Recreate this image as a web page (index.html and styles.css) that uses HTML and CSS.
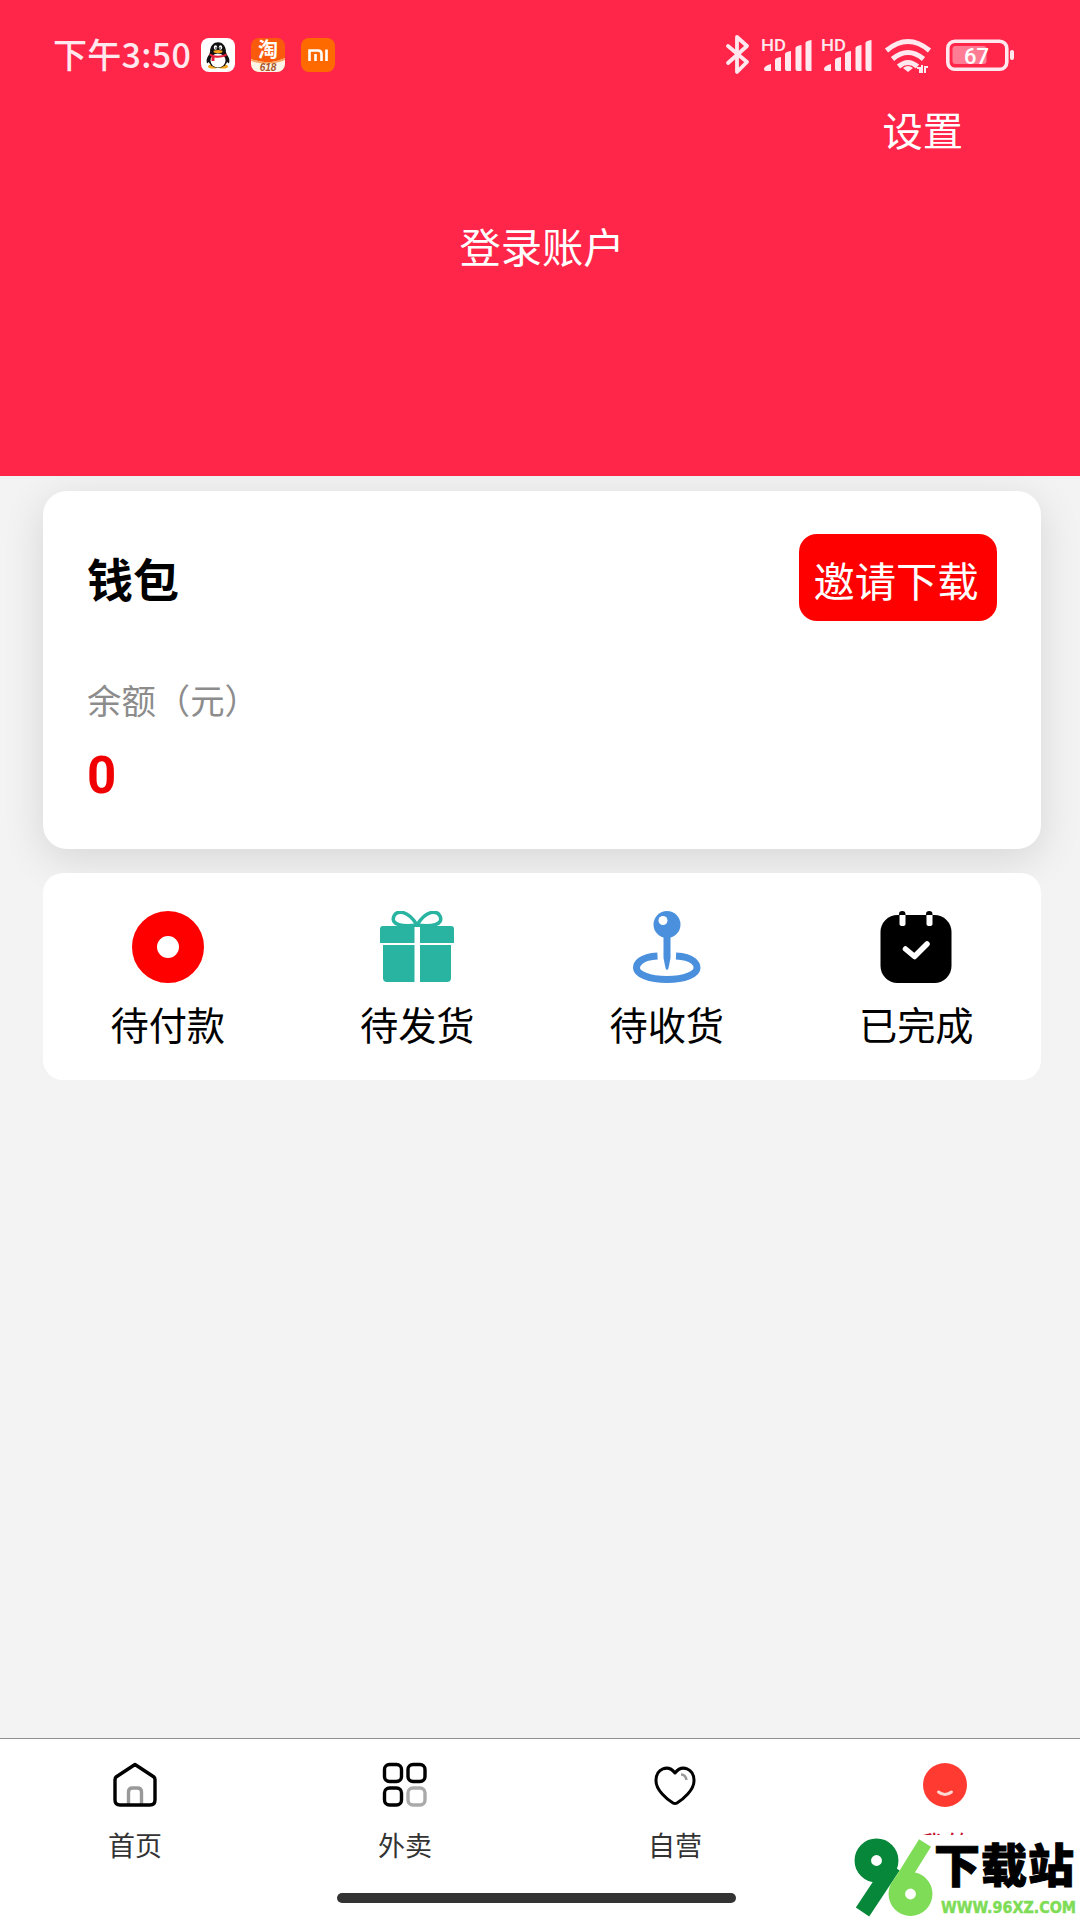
FILE: index.html
```html
<!DOCTYPE html>
<html lang="zh-CN">
<head>
<meta charset="utf-8">
<title>我的</title>
<link rel="stylesheet" href="styles.css">
</head>
<body>
<div class="screen">
  <header class="hero">
    <div class="status">
      <span class="clock">下午3:50</span>
      <div class="apps">
        <svg class="app" viewBox="0 0 34 34">
          <rect width="34" height="34" rx="8" fill="#fff"/>
          <ellipse cx="12" cy="28.500" rx="5" ry="2" fill="#f5a51b"/><ellipse cx="22" cy="28.500" rx="5" ry="2" fill="#f5a51b"/>
          <path d="M8 17Q4.500 21 6 25.500L9 23ZM26 17q3.500 4 2 8.500L25 23Z" fill="#111"/>
          <ellipse cx="17" cy="21" rx="10" ry="9" fill="#111"/>
          <path d="M9 14C9 1 25 1 25 14l1 4H8Z" fill="#111"/>
          <ellipse cx="17" cy="22.500" rx="7.500" ry="7" fill="#fff"/>
          <ellipse cx="14.500" cy="9.500" rx="1.700" ry="2.300" fill="#fff"/><ellipse cx="19.500" cy="9.500" rx="1.700" ry="2.300" fill="#fff"/>
          <circle cx="15" cy="10" r=".8"/><circle cx="19" cy="10" r=".8"/>
          <ellipse cx="17" cy="13.500" rx="4.500" ry="1.500" fill="#f5a51b"/>
          <path d="M8.500 15.500q8.500 4.500 17 0v2.500q-6 2.500-12 1.500v3.500h-3v-4.500l-2-1Z" fill="#e5203a"/>
        </svg>
        <svg class="app" viewBox="0 0 34 34">
          <defs><clipPath id="tile"><rect width="34" height="34" rx="8"/></clipPath></defs>
          <g clip-path="url(#tile)">
            <rect width="34" height="34" fill="#fa5a0c"/>
            <path d="M0 21q17 7 34-1v14H0Z" fill="#fff4e8"/>
            <path d="M0 21q17 7 34-1v2q-17 7-34 1Z" fill="#f9a35b"/>
          </g>
          <text class="tao" x="17" y="19">淘</text>
          <text class="sale" x="17" y="33">618</text>
        </svg>
        <svg class="app" viewBox="0 0 34 34">
          <rect width="34" height="34" rx="8" fill="#ff6a00"/>
          <path d="M8.500 23V12.500H17q3.500 0 3.500 3.500v7M14.500 16v7M25.500 11.500V23" fill="none" stroke="#fff" stroke-width="2.600"/>
        </svg>
      </div>
      <svg class="signals" viewBox="720 30 300 50">
        <path d="M728 46l19 16-10 10V37l10 9-19 17" fill="none" stroke="#ffe9ee" stroke-width="3.800" stroke-linejoin="round" stroke-linecap="round"/>
        <g id="cell" fill="#ffe9ee">
          <text class="hd" x="761" y="51" textLength="25" lengthAdjust="spacingAndGlyphs">HD</text>
          <path d="M764 69q0-3 7-5v7h-5q-2 0-2-2ZM775 60q0-2 6-3v14h-4q-2 0-2-2ZM785 54q0-2 6-3v20h-4q-2 0-2-2ZM795.500 48q0-2 6-3v26h-4q-2 0-2-2ZM805.500 43q0-2 6-3v31h-4q-2 0-2-2Z"/>
        </g>
        <use href="#cell" x="60"/>
        <g fill="none" stroke="#ffe9ee" stroke-width="5">
          <path d="M886.500 50.500q21.500-18 43 0M892.500 59q15.500-13 31 0M898.500 66.500q9.500-8 19 0"/>
        </g>
        <path d="M903 68q5-4 10 0l-5 4Z" fill="#ffe9ee"/>
        <path d="M917 68h3v5M922 65v8M928 67h-3v6" fill="none" stroke="#ffe9ee" stroke-width="2"/>
        <rect x="952.500" y="46" width="34" height="18" rx="3" fill="#ff7d94"/>
        <rect x="947.800" y="41.300" width="59" height="28" rx="7" fill="none" stroke="#ffe9ee" stroke-width="3.600"/>
        <rect x="1010" y="50" width="4" height="10" rx="2" fill="#ffe9ee"/>
        <text class="level" x="976.500" y="63.500">67</text>
      </svg>
    </div>
    <div class="settings">设置</div>
    <div class="login">登录账户</div>
  </header>

  <main class="content">
    <section class="wallet">
      <div class="wallet-head">
        <h1 class="wallet-title">钱包</h1>
        <button class="invite">邀请下载</button>
      </div>
      <div class="balance-label">余额（元）</div>
      <div class="balance">0</div>
    </section>

    <section class="orders">
      <div class="order">
        <svg class="order-icon" viewBox="0 0 76 72"><circle cx="38" cy="36" r="23.500" fill="none" stroke="#f00" stroke-width="25"/></svg>
        <span>待付款</span>
      </div>
      <div class="order">
        <svg class="order-icon" viewBox="0 0 76 72" fill="#29b4a2">
          <path d="M38 14C29-1 18-1 15 5c-4 9 9 11 23 9C47-1 58-1 61 5c4 9-9 11-23 9Z" fill="none" stroke="#29b4a2" stroke-width="3.500"/>
          <path d="M4 15h31.500v17H1V18q0-3 3-3ZM41 15h31q3 0 3 3v14H41ZM4 34h31.500v37H8q-4 0-4-4ZM41 34h31v33q0 4-4 4H41Z"/>
        </svg>
        <span>待发货</span>
      </div>
      <div class="order">
        <svg class="order-icon" viewBox="0 0 76 72" fill="#4b90dd">
          <path d="M28.500 45C11 46 7.500 53 7.500 57c0 6 12.500 11.500 30.500 11.500S68 63 68 57c0-4-3-11-21-12" fill="none" stroke="#4b90dd" stroke-width="7"/>
          <circle cx="38" cy="13.500" r="13.500"/><path d="M34.500 23h7v24l-2 10q-1.500 4-3 0l-2-10Z"/>
          <circle cx="34" cy="9.500" r="4.500" fill="#fff"/>
        </svg>
        <span>待收货</span>
      </div>
      <div class="order">
        <svg class="order-icon" viewBox="0 0 76 72">
          <rect x="2.500" y="4" width="71" height="68" rx="17"/>
          <rect x="21" y="0" width="6.500" height="9" rx="3.200"/><rect x="48" y="0" width="6.500" height="9" rx="3.200"/>
          <path d="M21.500 4h6v9q0 2-3 2t-3-2ZM48.500 4h6v9q0 2-3 2t-3-2Z" fill="#fff"/>
          <path d="M27.500 38l9 7.500L49 33" fill="none" stroke="#fff" stroke-width="5.500" stroke-linecap="round" stroke-linejoin="round"/>
        </svg>
        <span>已完成</span>
      </div>
    </section>
  </main>

  <nav class="tabs">
    <div class="tab">
      <svg class="tab-icon" viewBox="0 0 48 48" fill="none" stroke-width="3.400" stroke-linejoin="round">
        <path d="M17.500 44V32q0-4 4-4h5q4 0 4 4v12" stroke="#999"/>
        <path d="M24 4.500L43 17q1 1 1 3v20q0 5-5 5H9q-5 0-5-5V20q0-2 1-3Z" stroke="#000"/>
      </svg>
      <span>首页</span>
    </div>
    <div class="tab">
      <svg class="tab-icon" viewBox="0 0 48 48" fill="none" stroke="#000" stroke-width="3.400">
        <rect x="3.500" y="4.500" width="17" height="17" rx="5"/><rect x="27" y="4.500" width="17" height="17" rx="5"/><rect x="3.500" y="28" width="17" height="17" rx="5"/><rect x="27" y="28" width="17" height="17" rx="5" stroke="#aaa"/>
      </svg>
      <span>外卖</span>
    </div>
    <div class="tab">
      <svg class="tab-icon" viewBox="0 0 48 48" fill="none" stroke="#000" stroke-width="3" stroke-linejoin="round">
        <path d="M24 13C17 4 5 8.500 5 21c0 9 11 18.500 17 22q2 1.200 4 0c6-3.500 17-13 17-22C43 8.500 31 4 24 13Z"/>
        <path d="M30 14.500q4.500 0 5.500 5.500" stroke="#999" stroke-width="2.600"/>
      </svg>
      <span>自营</span>
    </div>
    <div class="tab tab-active">
      <svg class="tab-icon" viewBox="0 0 48 48">
        <circle cx="24" cy="25" r="22" fill="#ff3a31"/>
        <path d="M17.500 32q6.500 5 13 0" fill="none" stroke="#ffd6d0" stroke-width="3" stroke-linecap="round"/>
      </svg>
      <span>我的</span>
    </div>
  </nav>
  <div class="home-bar"></div>

  <svg class="brand" viewBox="840 1835 240 85">
    <rect x="840" y="1835" width="240" height="85" fill="#fff"/>
    <g fill="none" stroke="#068739">
      <circle cx="876.500" cy="1860.500" r="13.700" stroke-width="16.500"/>
      <path d="M893 1866L862.500 1912" stroke-width="16"/>
    </g>
    <g fill="none" stroke="#7edc57">
      <path d="M925 1843L897 1888" stroke-width="14"/>
      <circle cx="910.500" cy="1894" r="13.700" stroke-width="16.500"/>
    </g>
    <text class="brand-name" x="934" y="1882" textLength="140">下载站</text>
    <text class="brand-url" x="941" y="1912.500" textLength="135" lengthAdjust="spacingAndGlyphs">WWW.96XZ.COM</text>
  </svg>
</div>
</body>
</html>
```
FILE: styles.css
```css
* { box-sizing: border-box; }

body {
  margin: 0;
  font-family: "Noto Sans CJK SC", sans-serif;
  color: #000;
}

.screen {
  position: relative;
  width: 1080px;
  height: 1920px;
  display: flex;
  flex-direction: column;
  background: #f3f3f3;
  overflow: hidden;
}

.hero {
  flex-shrink: 0;
  height: 476px;
  background: #ff264a;
  color: #fff;
}

.status {
  display: flex;
  align-items: center;
  height: 110px;
  padding: 0 60px 0 53px;
}

.clock {
  width: 148px;
  padding-bottom: 2px;
  font-size: 34px;
  font-weight: 500;
  letter-spacing: 0.3px;
  line-height: 50px;
  color: #ffe9ee;
  white-space: nowrap;
}

.apps { display: flex; gap: 16px; }
.app { width: 34px; height: 34px; overflow: visible; }

.tao { font-size: 20px; font-weight: 700; fill: #fff; text-anchor: middle; }
.sale { font: italic 700 10px "Liberation Sans", sans-serif; fill: #a8552c; text-anchor: middle; }

.signals { width: 300px; height: 50px; margin-left: auto; }
.hd { font: 500 16.500px Roboto, sans-serif; }
.level { font: 500 22px Roboto, sans-serif; fill: #fff; text-anchor: middle; }

.settings {
  padding-right: 117px;
  text-align: right;
  font-size: 40.300px;
  line-height: 38px;
}

.login {
  margin-top: 68px;
  padding-left: 4px;
  text-align: center;
  font-size: 41.300px;
  line-height: 58px;
}

.content {
  flex-shrink: 0;
  height: 1262px;
  padding: 15px 39px 0 43px;
  overflow: hidden;
}

.wallet {
  height: 358px;
  padding: 43px 44px 0;
  border-radius: 24px;
  background: #fff;
  box-shadow: 0 10px 40px 2px rgba(0, 0, 0, 0.11);
}

.wallet-head {
  display: flex;
  justify-content: space-between;
  align-items: center;
  height: 87px;
}

.wallet-title { margin: 0; padding-bottom: 2px; font-size: 46px; line-height: 60px; }

.invite {
  width: 198px;
  height: 87px;
  padding: 2px 4px 0 0;
  border: 0;
  border-radius: 18px;
  background: #f00;
  color: #fff;
  font: 41.300px "Noto Sans CJK SC", sans-serif;
  white-space: nowrap;
}

.balance-label {
  margin-top: 53px;
  color: #8c8c8c;
  font-size: 34.400px;
  line-height: 50px;
}

.balance {
  margin-top: 22px;
  color: #f00000;
  font: 700 51px/60px Roboto, sans-serif;
}

.orders {
  position: relative;
  display: grid;
  grid-template-columns: repeat(4, 1fr);
  height: 207px;
  margin-top: 24px;
  padding-top: 38px;
  border-radius: 20px;
  background: #fff;
}

.order {
  display: flex;
  flex-direction: column;
  align-items: center;
  gap: 15px;
  font-size: 38.200px;
  line-height: 52px;
}

.order-icon { width: 76px; height: 72px; }

.tabs {
  display: grid;
  grid-template-columns: repeat(4, 1fr);
  height: 182px;
  padding-top: 21px;
  border-top: 1px solid #8f8f8f;
  background: #fff;
}

.tab {
  display: flex;
  flex-direction: column;
  align-items: center;
  gap: 19px;
  color: #333;
  font-size: 27px;
  line-height: 36px;
}

.tab-icon { width: 48px; height: 48px; }
.tab-active { color: #c8102e; }

.home-bar {
  position: absolute;
  left: 337px;
  bottom: 17px;
  width: 399px;
  height: 10px;
  border-radius: 5px;
  background: #333;
}

.brand {
  position: absolute;
  right: 0;
  bottom: 0;
  width: 240px;
  height: 85px;
}

.brand-name { font-size: 46px; font-weight: 900; stroke: #000; stroke-width: 1; }
.brand-url {
  font: 700 16.500px "DejaVu Sans", sans-serif;
  fill: #7edc57;
  stroke: #7edc57;
  stroke-width: 0.5;
}
```
